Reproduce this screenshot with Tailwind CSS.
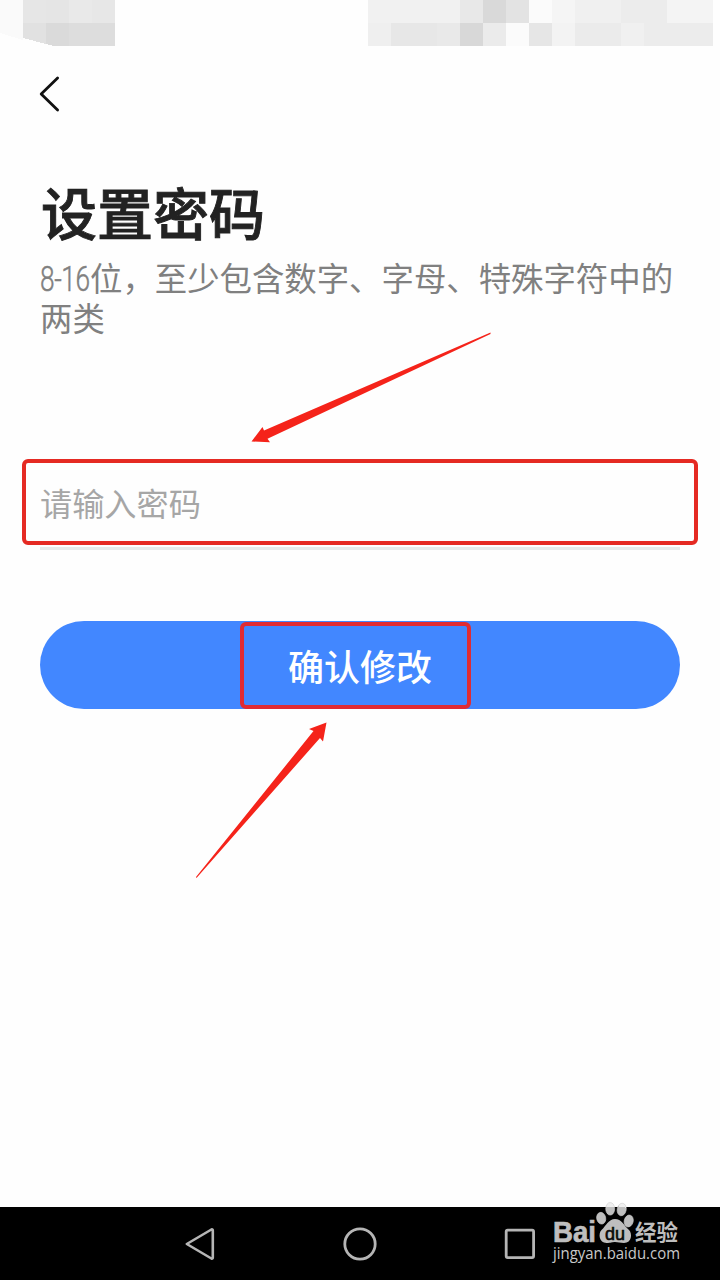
<!DOCTYPE html>
<html lang="zh-CN">

<head>
    <meta charset="utf-8">
    <meta name="viewport" content="width=device-width, initial-scale=1.0">
    <title>设置密码</title>
    <script src="https://cdn.jsdelivr.net/npm/@tailwindcss/browser@4"></script>
</head>

<body class="bg-white overflow-hidden">
    <div class="relative flex flex-col w-[720px] h-[1280px] bg-[#fefefe] font-['Noto_Sans_CJK_SC',sans-serif]">

        <!-- status bar, pixelated -->
        <svg class="block shrink-0" width="720" height="46" shape-rendering="crispEdges">
            <path d="M0 0H23V40L0 33Z" fill="#fafafa" />
            <path d="M23 0H46V23H23Z" fill="#e6e6e6" />
            <path d="M46 0H69V23H46Z" fill="#e5e5e5" />
            <path d="M69 0H92V23H69Z" fill="#e9e9e9" />
            <path d="M92 0H115V23H92Z" fill="#e7e7e7" />
            <path d="M23 23H46V44L23 38Z" fill="#e1e1e1" />
            <path d="M46 23H69V46H54L46 44Z" fill="#dadada" />
            <path d="M69 23H115V46H69Z" fill="#dddddd" />
            <path d="M368 0H460V23H368Z" fill="#f1f1f1" />
            <path d="M460 0H483V23H460Z" fill="#e8e8e8" />
            <path d="M483 0H506V23H483Z" fill="#d9d9d9" />
            <path d="M506 0H529V23H506Z" fill="#e3e3e3" />
            <path d="M529 0H552V23H529Z" fill="#fbfbfb" />
            <path d="M552 0H575V23H552Z" fill="#f5f5f5" />
            <path d="M575 0H621V23H575Z" fill="#f0f0f0" />
            <path d="M621 0H667V23H621Z" fill="#ececec" />
            <path d="M667 0H713V23H667Z" fill="#f4f4f4" />
            <path d="M368 23H391V46H368Z" fill="#efefef" />
            <path d="M391 23H437V46H391Z" fill="#e7e7e7" />
            <path d="M437 23H460V46H437Z" fill="#e9e9e9" />
            <path d="M460 23H483V46H460Z" fill="#d8d8d8" />
            <path d="M483 23H506V46H483Z" fill="#ebebeb" />
            <path d="M506 23H529V46H506Z" fill="#fbfbfb" />
            <path d="M529 23H552V46H529Z" fill="#e6e6e6" />
            <path d="M552 23H575V46H552Z" fill="#f3f3f3" />
            <path d="M575 23H621V46H575Z" fill="#ebebeb" />
            <path d="M621 23H644V46H621Z" fill="#f0f0f0" />
            <path d="M644 23H713V46H644Z" fill="#ececec" />
        </svg>

        <header class="flex items-center h-24 pl-9">
            <button aria-label="返回">
                <svg width="28" height="40" viewBox="0 0 28 40" fill="none" stroke="#111" stroke-width="2.8" stroke-linecap="round" stroke-linejoin="round">
                    <path d="M21.6 4L5.2 20L21.6 36" />
                </svg>
            </button>
        </header>

        <main class="flex flex-col flex-1 px-10">
            <h1 class="mt-[31px] h-[76px] pl-px text-[56px] leading-[76px] font-medium text-[#222] [-webkit-text-stroke:0.9px_#222]">设置密码</h1>
            <p class="mt-2 w-[660px] h-20 text-[32.4px] leading-10 text-[#808080]"><span class="inline-block align-top w-[50px] h-10 pt-[3px] whitespace-nowrap font-['Roboto'] font-light text-[35px] tracking-[-0.5px] [-webkit-text-stroke:0.5px_#808080] origin-left scale-x-75">8-16</span>位，至少包含数字、字母、特殊字符中的<br>两类</p>

            <div class="relative mt-[123px] h-[90px] border-b-3 border-[#e6eaea]">
                <input type="text" placeholder="请输入密码" class="block w-full h-[83px] text-[32.2px] outline-none placeholder:text-[#a6a6a6]">
                <div class="absolute -left-[18px] -top-px w-[676px] h-[86px] border-4 border-[#e52a23] rounded-md"></div>
            </div>

            <button class="relative mt-[71px] h-[88px] pb-px rounded-full bg-[#4287ff] text-white text-4xl font-medium">
                确认修改
                <span class="absolute left-[200px] top-px w-[231px] h-[87px] border-4 border-[#e02b33] rounded-md"></span>
            </button>
        </main>

        <nav class="flex items-center justify-between h-[73px] bg-black px-[184px]">
            <svg width="32" height="36" viewBox="0 0 32 36" fill="none" stroke="#b5b5b5" stroke-width="2.6" stroke-linejoin="round">
                <path d="M2.8 18L27.4 3.5Q28.8 3 28.8 4.5V31.5Q28.8 33 27.4 32.5Z" />
            </svg>
            <svg width="36" height="36" viewBox="0 0 36 36" fill="none" stroke="#b5b5b5" stroke-width="2.8">
                <circle cx="18" cy="18" r="15.2" />
            </svg>
            <svg width="32" height="36" viewBox="0 0 32 36" fill="none" stroke="#b5b5b5" stroke-width="2.8">
                <rect x="2.2" y="4.2" width="27.4" height="27.4" rx="1.5" />
            </svg>
        </nav>

        <!-- arrows and watermark lie over the page -->
        <svg class="absolute inset-0 pointer-events-none" width="720" height="1280">
            <defs>
                <linearGradient id="toe" gradientUnits="userSpaceOnUse" x1="0" y1="1200" x2="0" y2="1214">
                    <stop offset="0.5" stop-color="#f0f0f0" />
                    <stop offset="0.5" stop-color="#bebebe" />
                </linearGradient>
            </defs>
            <path d="M490.500 332.500L264 430.500L262.500 427L251.500 441.500L270 442.200L267.500 438.800L490.500 334Z" fill="#f5231a" />
            <path d="M196 877L313.500 731L309 729L326.500 722.500L323 741.500L320 738L196.500 878Z" fill="#f5231a" />
            <g fill="#bebebe">
                <g fill="url(#toe)" stroke="#cfcfcf" stroke-width="0.6">
                    <ellipse cx="601.200" cy="1218.200" rx="4.500" ry="5.900" transform="rotate(-12 601.200 1218.200)" />
                    <ellipse cx="610.200" cy="1208.800" rx="4.500" ry="6.300" />
                    <ellipse cx="621.700" cy="1209.500" rx="4.500" ry="6.300" transform="rotate(10 621.700 1209.500)" />
                    <ellipse cx="628.700" cy="1221" rx="4.500" ry="6" transform="rotate(14 628.700 1221)" />
                </g>
                <path d="M615 1219C608.500 1219 606 1226 601.500 1230C598 1233.500 599 1243 606.500 1243C611 1243 612 1242 615 1242C618 1242 620 1243 624 1243C632 1243 632.500 1233.500 629 1230C624 1225.500 621.500 1219 615 1219Z" />
                <text x="553" y="1242" font-size="29" font-weight="700" stroke="#bebebe" stroke-width="0.7" textLength="43" lengthAdjust="spacingAndGlyphs" class="font-['Liberation_Sans',sans-serif]">Bai</text>
                <text x="605" y="1239.500" font-size="19" font-weight="400" fill="#080808" stroke="#080808" stroke-width="0.6" textLength="20" lengthAdjust="spacingAndGlyphs" class="font-['Liberation_Sans',sans-serif]">du</text>
                <text x="635" y="1240" font-size="22" font-weight="700" textLength="43" lengthAdjust="spacingAndGlyphs">经验</text>
                <text x="553" y="1258.500" font-size="17" fill="#c8c8c8" textLength="127" lengthAdjust="spacingAndGlyphs" class="font-['Open_Sans',sans-serif] font-medium">jingyan.baidu.com</text>
            </g>
        </svg>
    </div>
</body>

</html>
